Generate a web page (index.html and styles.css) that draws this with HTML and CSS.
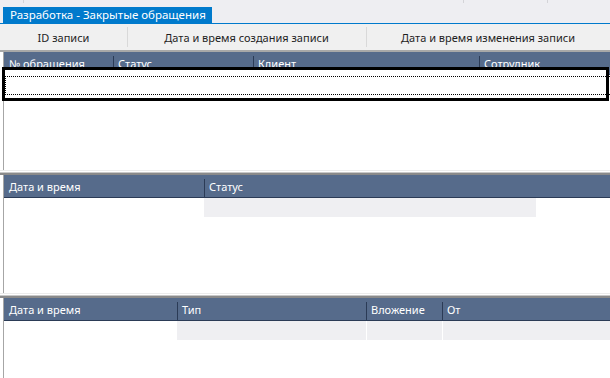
FILE: index.html
```html
<!DOCTYPE html>
<html lang="ru">
<head>
    <meta charset="UTF-8">
    <meta name="viewport" content="width=device-width, initial-scale=1.0">
    <title>Разработка - Закрытые обращения</title>
    <link rel="stylesheet" href="styles.css">
</head>
<body>
    <div class="topbar">
        <div class="tab">Разработка - Закрытые обращения</div>
    </div>

    <div class="colbar">
        <div class="colbar-cell">ID записи</div>
        <div class="colbar-cell">Дата и время создания записи</div>
        <div class="colbar-cell">Дата и время изменения записи</div>
    </div>

    <div class="panel panel-requests">
        <div class="grid-head grid-requests">
            <div class="head-cell">№ обращения</div>
            <div class="head-cell sep">Статус</div>
            <div class="head-cell sep">Клиент</div>
            <div class="head-cell sep">Сотрудник</div>
        </div>
        <div class="focus-row">
            <div class="focus-dots"></div>
        </div>
    </div>

    <div class="splitter"></div>

    <div class="panel">
        <div class="grid-head grid-status">
            <div class="head-cell">Дата и время</div>
            <div class="head-cell sep">Статус</div>
        </div>
        <div class="grid-row grid-status-row">
            <div class="row-cell"></div>
            <div class="row-cell filled"></div>
            <div class="row-cell"></div>
        </div>
    </div>

    <div class="splitter"></div>

    <div class="panel panel-last">
        <div class="grid-head grid-files">
            <div class="head-cell">Дата и время</div>
            <div class="head-cell sep">Тип</div>
            <div class="head-cell sep">Вложение</div>
            <div class="head-cell sep">От</div>
        </div>
        <div class="grid-row grid-files">
            <div class="row-cell"></div>
            <div class="row-cell filled"></div>
            <div class="row-cell filled split"></div>
            <div class="row-cell filled split"></div>
        </div>
    </div>
</body>
</html>
```

FILE: styles.css
```css
body {
    margin: 0;
    width: 610px;
    height: 378px;
    overflow: hidden;
    background: #ffffff;
    font-family: 'Noto Sans', 'Open Sans', sans-serif;
    font-size: 11px;
    color: #1e1e1e;
}

.topbar {
    height: 23px;
    display: flex;
    align-items: flex-end;
    padding-left: 3px;
    background-color: #eeeef2;
    background-image: linear-gradient(#d4d4d8, #d4d4d8), linear-gradient(#d4d4d8, #d4d4d8), linear-gradient(#d4d4d8, #d4d4d8);
    background-size: 1px 3px;
    background-position: 23px 0, 463px 0, 547px 0;
    background-repeat: no-repeat;
    border-bottom: 1px solid #007acc;
}

.tab {
    height: 16px;
    line-height: 16px;
    padding: 0 6px 0 7px;
    background: #007acc;
    color: #ffffff;
    font-size: 11.5px;
    white-space: nowrap;
}

.colbar {
    display: grid;
    grid-template-columns: 127px 239px 1fr;
    height: 26px;
    background: #f0f0f0;
    border-bottom: 2px solid #a8a8a8;
}

.colbar-cell {
    display: flex;
    align-items: center;
    justify-content: center;
    white-space: nowrap;
    background-image: linear-gradient(#d9d9d9, #d9d9d9);
    background-size: 1px 20px;
    background-position: left center;
    background-repeat: no-repeat;
}

.colbar-cell:first-child {
    background-image: none;
}

.panel {
    position: relative;
    height: 118px;
    margin-left: 3px;
    border-left: 1px solid #a6a6a6;
}

.panel-last {
    height: 80px;
}

.splitter {
    height: 2px;
    border-top: 1px solid #ececec;
    border-bottom: 2px solid #8a8a8a;
    box-shadow: inset 0 -1px 0 #c8c8c8;
    background: #ffffff;
}

.grid-head {
    display: grid;
    height: 22px;
    background: #566b8b;
    border-bottom: 1px solid #2b3b56;
    color: #ffffff;
}

.grid-requests {
    grid-template-columns: 109px 140px 226px 1fr;
}

.grid-status {
    grid-template-columns: 200px 1fr;
}

.grid-status-row {
    grid-template-columns: 200px 332px 1fr;
}

.grid-files {
    grid-template-columns: 173px 189px 76px 1fr;
}

.head-cell {
    display: flex;
    align-items: center;
    padding-left: 5px;
    white-space: nowrap;
    overflow: hidden;
}

.head-cell.sep {
    background-image: linear-gradient(#2b3b56, #2b3b56);
    background-size: 1px 18px;
    background-position: left bottom;
    background-repeat: no-repeat;
}

.grid-row {
    display: grid;
    height: 19px;
}

.row-cell.filled {
    background: #efeff2;
}

.row-cell.split {
    border-left: 1px solid #ffffff;
}

/* focused first row of the requests grid */
.focus-row {
    position: absolute;
    left: -2px;
    top: 15px;
    width: 601px;
    height: 28px;
    border: 3px solid #000000;
    background: #ffffff;
}

.focus-dots {
    position: absolute;
    left: 0;
    top: 6px;
    width: 610px;
    height: 17px;
    border: 1px dotted #000000;
    border-right: none;
}
```
